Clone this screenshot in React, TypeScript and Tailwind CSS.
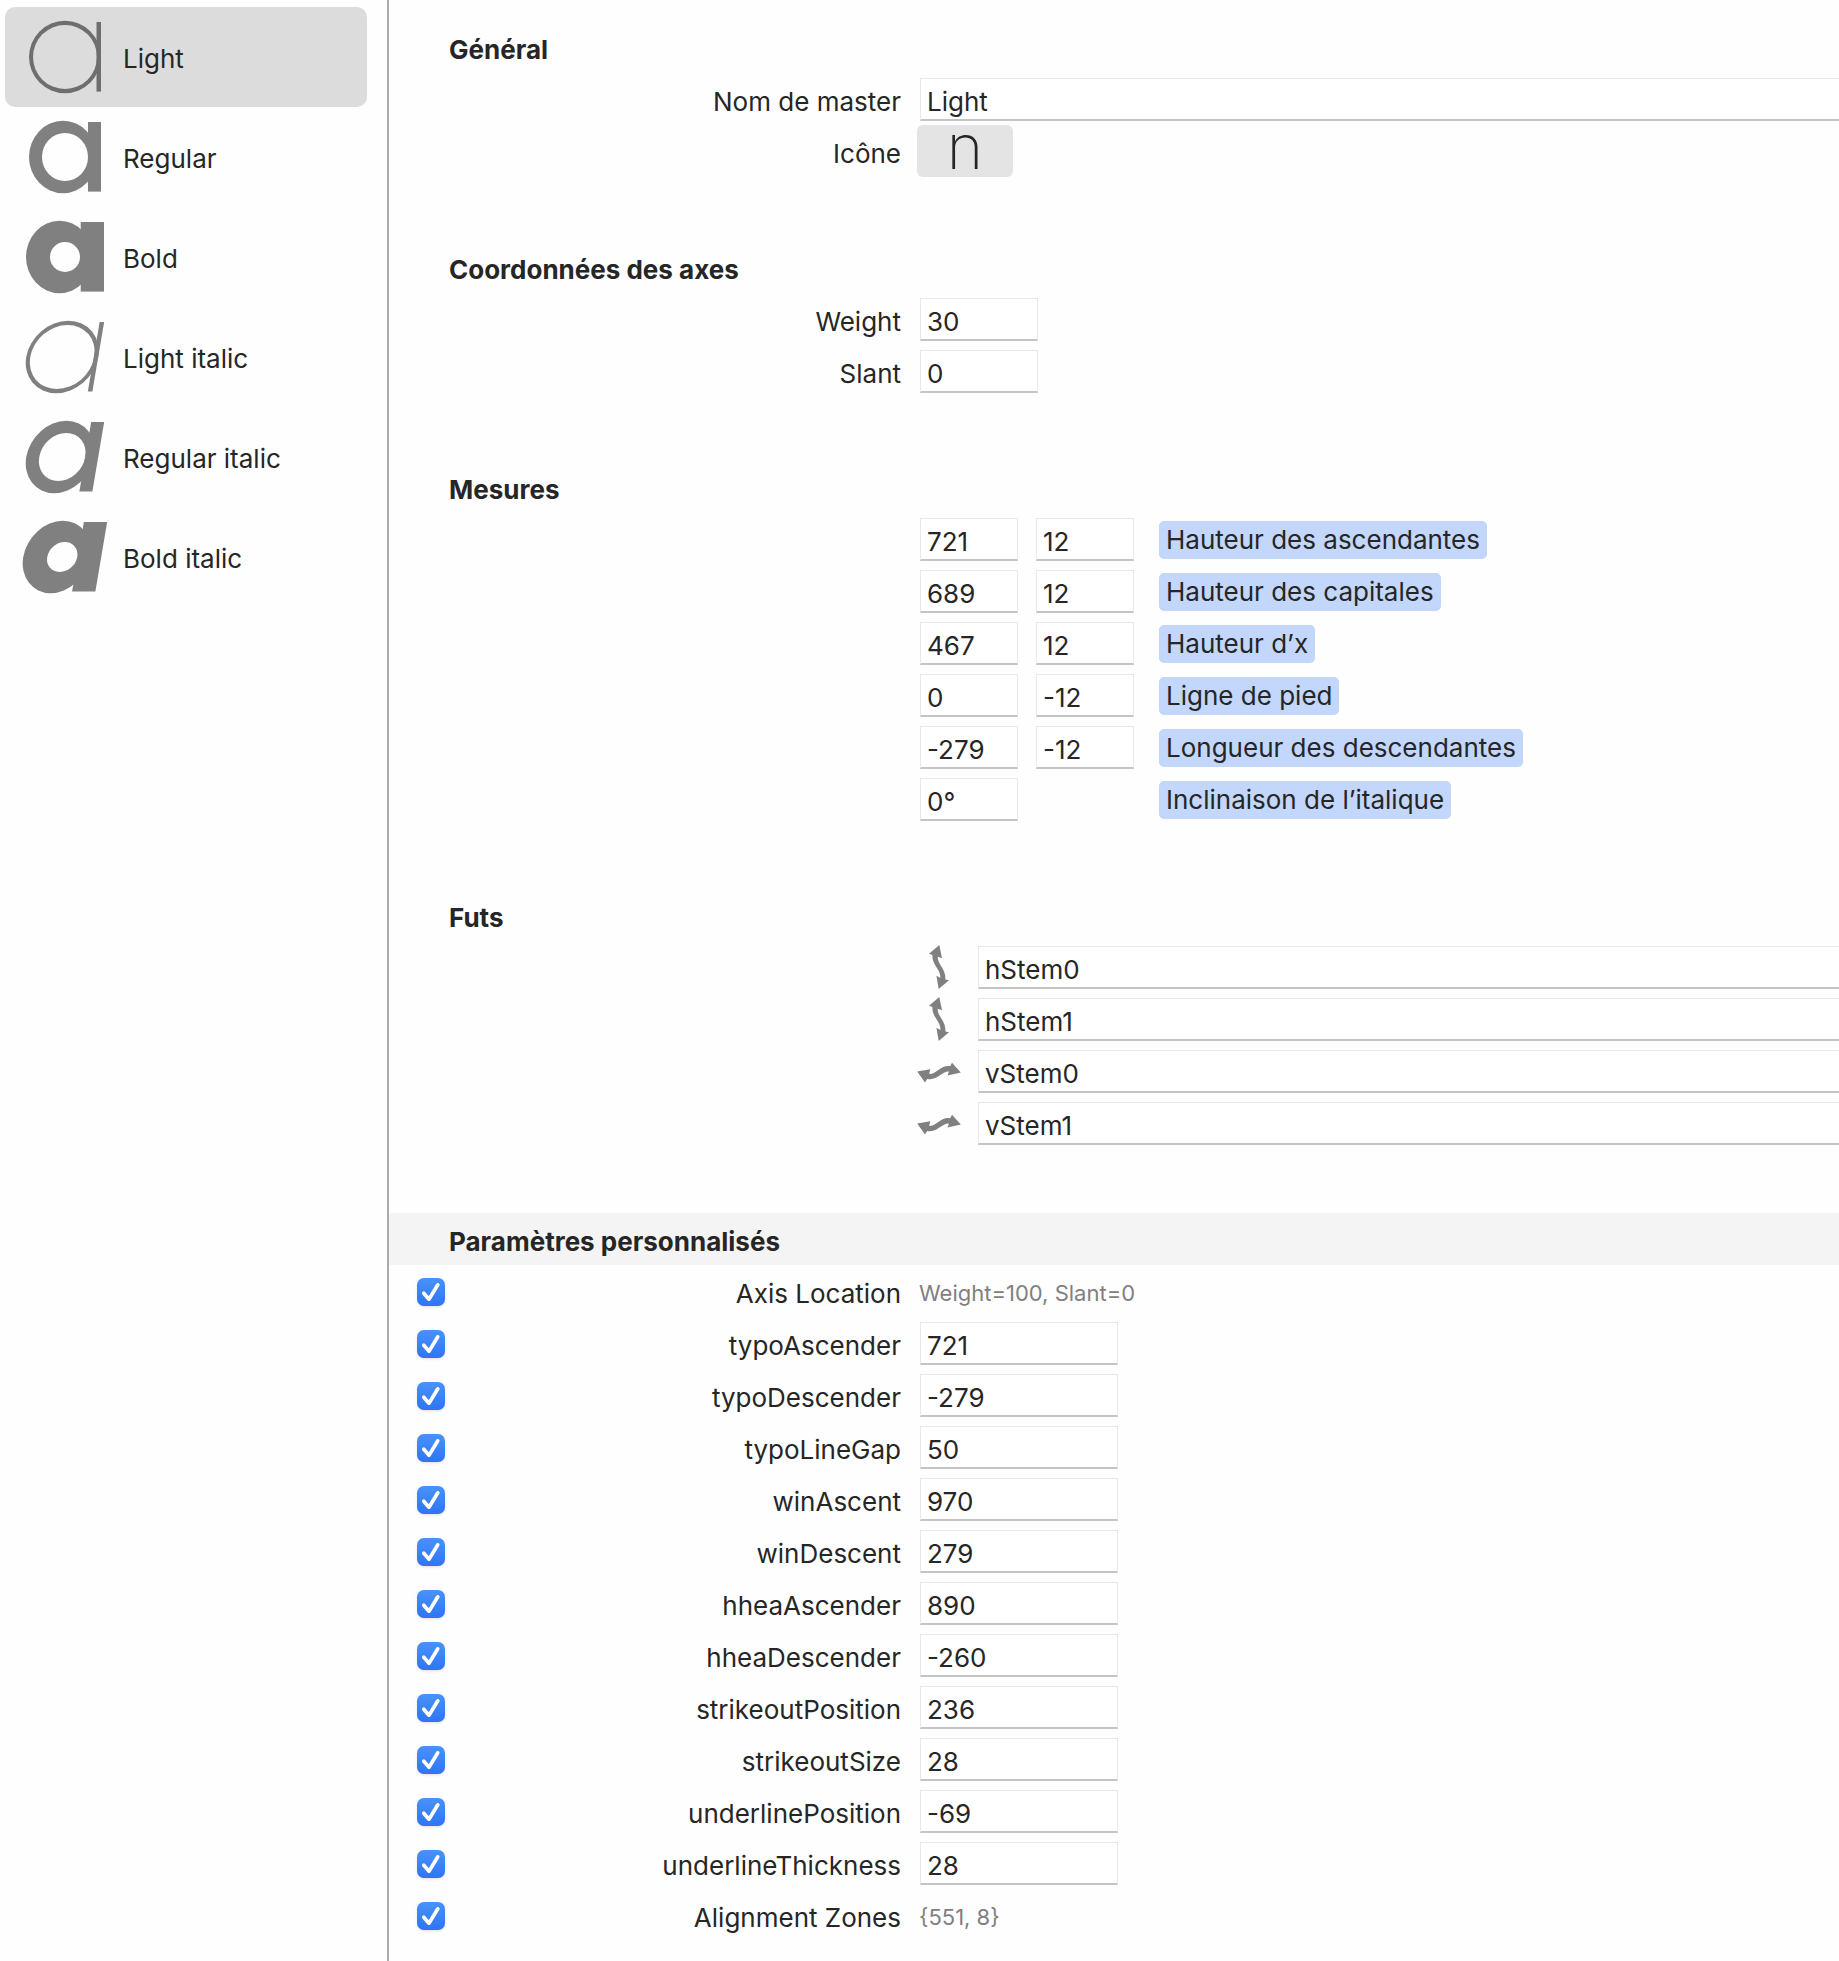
import React, { useState } from 'react'

type Master = { name: string; weight: 'light' | 'regular' | 'bold'; italic: boolean }

const masters: Master[] = [
  { name: 'Light', weight: 'light', italic: false },
  { name: 'Regular', weight: 'regular', italic: false },
  { name: 'Bold', weight: 'bold', italic: false },
  { name: 'Light italic', weight: 'light', italic: true },
  { name: 'Regular italic', weight: 'regular', italic: true },
  { name: 'Bold italic', weight: 'bold', italic: true },
]

const metrics = [
  { value: '721', overshoot: '12', label: 'Hauteur des ascendantes' },
  { value: '689', overshoot: '12', label: 'Hauteur des capitales' },
  { value: '467', overshoot: '12', label: 'Hauteur d’x' },
  { value: '0', overshoot: '-12', label: 'Ligne de pied' },
  { value: '-279', overshoot: '-12', label: 'Longueur des descendantes' },
  { value: '0°', overshoot: null, label: 'Inclinaison de l’italique' },
]

const stems = ['hStem0', 'hStem1', 'vStem0', 'vStem1']

const params = [
  { name: 'Axis Location', text: 'Weight=100, Slant=0' },
  { name: 'typoAscender', value: '721' },
  { name: 'typoDescender', value: '-279' },
  { name: 'typoLineGap', value: '50' },
  { name: 'winAscent', value: '970' },
  { name: 'winDescent', value: '279' },
  { name: 'hheaAscender', value: '890' },
  { name: 'hheaDescender', value: '-260' },
  { name: 'strikeoutPosition', value: '236' },
  { name: 'strikeoutSize', value: '28' },
  { name: 'underlinePosition', value: '-69' },
  { name: 'underlineThickness', value: '28' },
  { name: 'Alignment Zones', text: '{551, 8}' },
]

// bowl, counter and stem of each master's preview
const shapes = {
  light: { cx: 43, rx: 36, irx: 32, iry: 32, stemX: 74.5, stemW: 4.5 },
  regular: { cx: 41, rx: 34, irx: 23, iry: 24, stemX: 66, stemW: 13 },
  bold: { cx: 37.5, rx: 33.5, irx: 15, iry: 15, stemX: 58.7, stemW: 23.3 },
}

const MasterIcon = ({ weight, italic }: { weight: Master['weight']; italic: boolean }) => {
  const s = shapes[weight]
  const maskId = `counter-${weight}-${italic ? 'italic' : 'roman'}`
  return (
    <svg viewBox="0 0 88 80" className="h-20 w-22 shrink-0" fill="currentColor" aria-hidden="true">
      <mask id={maskId} maskUnits="userSpaceOnUse" x="0" y="0" width="88" height="80">
        <rect width="88" height="80" fill="white" />
        <ellipse cx="43" cy="40" rx={s.irx} ry={s.iry} fill="black" />
      </mask>
      <g transform={italic ? 'translate(4 0) skewX(-9.6)' : undefined}>
        <ellipse cx={s.cx} cy="40" rx={s.rx} ry="36.2" mask={`url(#${maskId})`} />
        <rect x={s.stemX} y="5" width={s.stemW} height="69.6" />
      </g>
    </svg>
  )
}

const StemIcon = ({ vertical }: { vertical: boolean }) => (
  <svg viewBox="0 0 44 44" className="size-11 shrink-0" fill="#808080" aria-hidden="true">
    {vertical ? (
      <path d="M22.3 0 L25 13.3 L20.8 11.8 C20 19 29 23.5 28.4 34.4 L32 35.3 L21.7 44 L19.4 30.8 L23.4 33 C24 24 14.6 20 15.4 10 L12 8.7 Z" />
    ) : (
      <path d="M0.2 22.6 L13.3 20.3 L12.2 24.8 C19.5 26 22.5 16 33.2 17.2 L35 13.8 L43.8 23.4 L30.5 26.6 L32 22.6 C24.5 22.2 20.5 32 10.2 30 L8 33.6 Z" />
    )}
  </svg>
)

const Field = ({ id, label, value, className }: { id: string; label?: string; value: string; className: string }) => (
  <input
    id={id}
    aria-label={label}
    type="text"
    defaultValue={value}
    className={`mt-px h-[43px] min-w-0 border border-[#e9e9e9] border-b-2 border-b-[#c4c4c4] bg-white pt-1 pl-[6px] outline-none ${className}`}
  />
)

const Label = ({ htmlFor, children }: { htmlFor: string; children: React.ReactNode }) => (
  <label htmlFor={htmlFor} className="w-[452px] shrink-0 pt-[6px] text-right">{children}</label>
)

const Section = ({ title, children }: { title: string; children: React.ReactNode }) => (
  <section className="mb-16">
    <h2 className="h-13 pt-[13px] pl-15 leading-8 font-bold">{title}</h2>
    {children}
  </section>
)

const Row = ({ children }: { children: React.ReactNode }) => (
  <div className="flex h-13 items-center pl-15">{children}</div>
)

const App = () => {
  const [current, setCurrent] = useState('Light')

  return (
    <div className="flex min-h-screen bg-[#fefefe] font-['Inter',sans-serif] text-[26px] leading-8 text-[#262626]">
      <aside className="w-[389px] shrink-0 border-r-2 border-[#ababab] pt-[7px] pr-5 pl-[5px]">
        {masters.map((master) => (
          <button
            key={master.name}
            type="button"
            onClick={() => setCurrent(master.name)}
            className={`flex h-25 w-full items-center rounded-[10px] pl-[17px] text-left ${current === master.name ? 'bg-[#dcdcdc]' : ''}`}
          >
            <span className={current === master.name ? 'text-[#6e6e6e]' : 'text-[#808080]'}>
              <MasterIcon weight={master.weight} italic={master.italic} />
            </span>
            <span className="pt-1 pl-[13px]">{master.name}</span>
          </button>
        ))}
      </aside>

      <main className="min-w-0 flex-1 pt-[21px]">
        <Section title="Général">
          <Row>
            <Label htmlFor="master-name">Nom de master</Label>
            <Field id="master-name" value="Light" className="ml-[19px] flex-1 border-r-0" />
          </Row>
          <Row>
            <Label htmlFor="master-icon">Icône</Label>
            <button id="master-icon" type="button" className="ml-4 h-13 w-24 rounded-md bg-[#e4e4e4] pb-2 text-center text-[62px] leading-[44px] font-extralight">
              n
            </button>
          </Row>
        </Section>

        <Section title="Coordonnées des axes">
          <Row>
            <Label htmlFor="axis-weight">Weight</Label>
            <Field id="axis-weight" value="30" className="ml-[19px] w-[118px]" />
          </Row>
          <Row>
            <Label htmlFor="axis-slant">Slant</Label>
            <Field id="axis-slant" value="0" className="ml-[19px] w-[118px]" />
          </Row>
        </Section>

        <Section title="Mesures">
          {metrics.map((metric, i) => (
            <Row key={metric.label}>
              <Field id={`metric-${i}`} value={metric.value} className="ml-[471px] w-[98px]" />
              <div className="ml-[18px] flex w-[123px] shrink-0">
                {metric.overshoot && (
                  <Field id={`overshoot-${i}`} label={`${metric.label} 2`} value={metric.overshoot} className="w-[98px]" />
                )}
              </div>
              <label htmlFor={`metric-${i}`} className="mt-[2px] rounded-[5px] bg-[#c2d7fb] px-[7px] py-[3px]">
                {metric.label}
              </label>
            </Row>
          ))}
        </Section>

        <Section title="Futs">
          {stems.map((stem) => (
            <Row key={stem}>
              <div className="ml-[468px] flex">
                <StemIcon vertical={stem.startsWith('h')} />
              </div>
              <Field id={stem} label={stem} value={stem} className="ml-[17px] flex-1 border-r-0" />
            </Row>
          ))}
        </Section>

        <section className="pb-5">
          <h2 className="h-13 bg-[#f4f4f4] pt-[13px] pl-15 leading-8 font-bold">Paramètres personnalisés</h2>
          {params.map((param) => (
            <div key={param.name} className="flex h-13 items-center pl-7">
              <span className="relative mt-[2px] flex size-7 shrink-0">
                <input
                  type="checkbox"
                  defaultChecked
                  aria-label={param.name}
                  className="peer size-7 appearance-none rounded-[7px] border border-[#c4c4c4] bg-white shadow-sm checked:border-0 checked:bg-linear-to-b checked:from-[#4a92f8] checked:to-[#2f74f6]"
                />
                <svg viewBox="0 0 28 28" className="pointer-events-none absolute inset-0 hidden peer-checked:block" fill="none" stroke="white" strokeWidth="3.6" strokeLinecap="round" strokeLinejoin="round" aria-hidden="true">
                  <path d="M6.8 15.2 L12 21.2 L20.8 6.8" />
                </svg>
              </span>
              <label htmlFor={`param-${param.name}`} className="w-[456px] shrink-0 pt-[6px] text-right">{param.name}</label>
              {param.value ? (
                <Field id={`param-${param.name}`} value={param.value} className="ml-[19px] w-[198px]" />
              ) : (
                <output id={`param-${param.name}`} className="ml-[18px] pt-1 text-[22px] text-[#808080]">{param.text}</output>
              )}
            </div>
          ))}
        </section>
      </main>
    </div>
  )
}

export default App
